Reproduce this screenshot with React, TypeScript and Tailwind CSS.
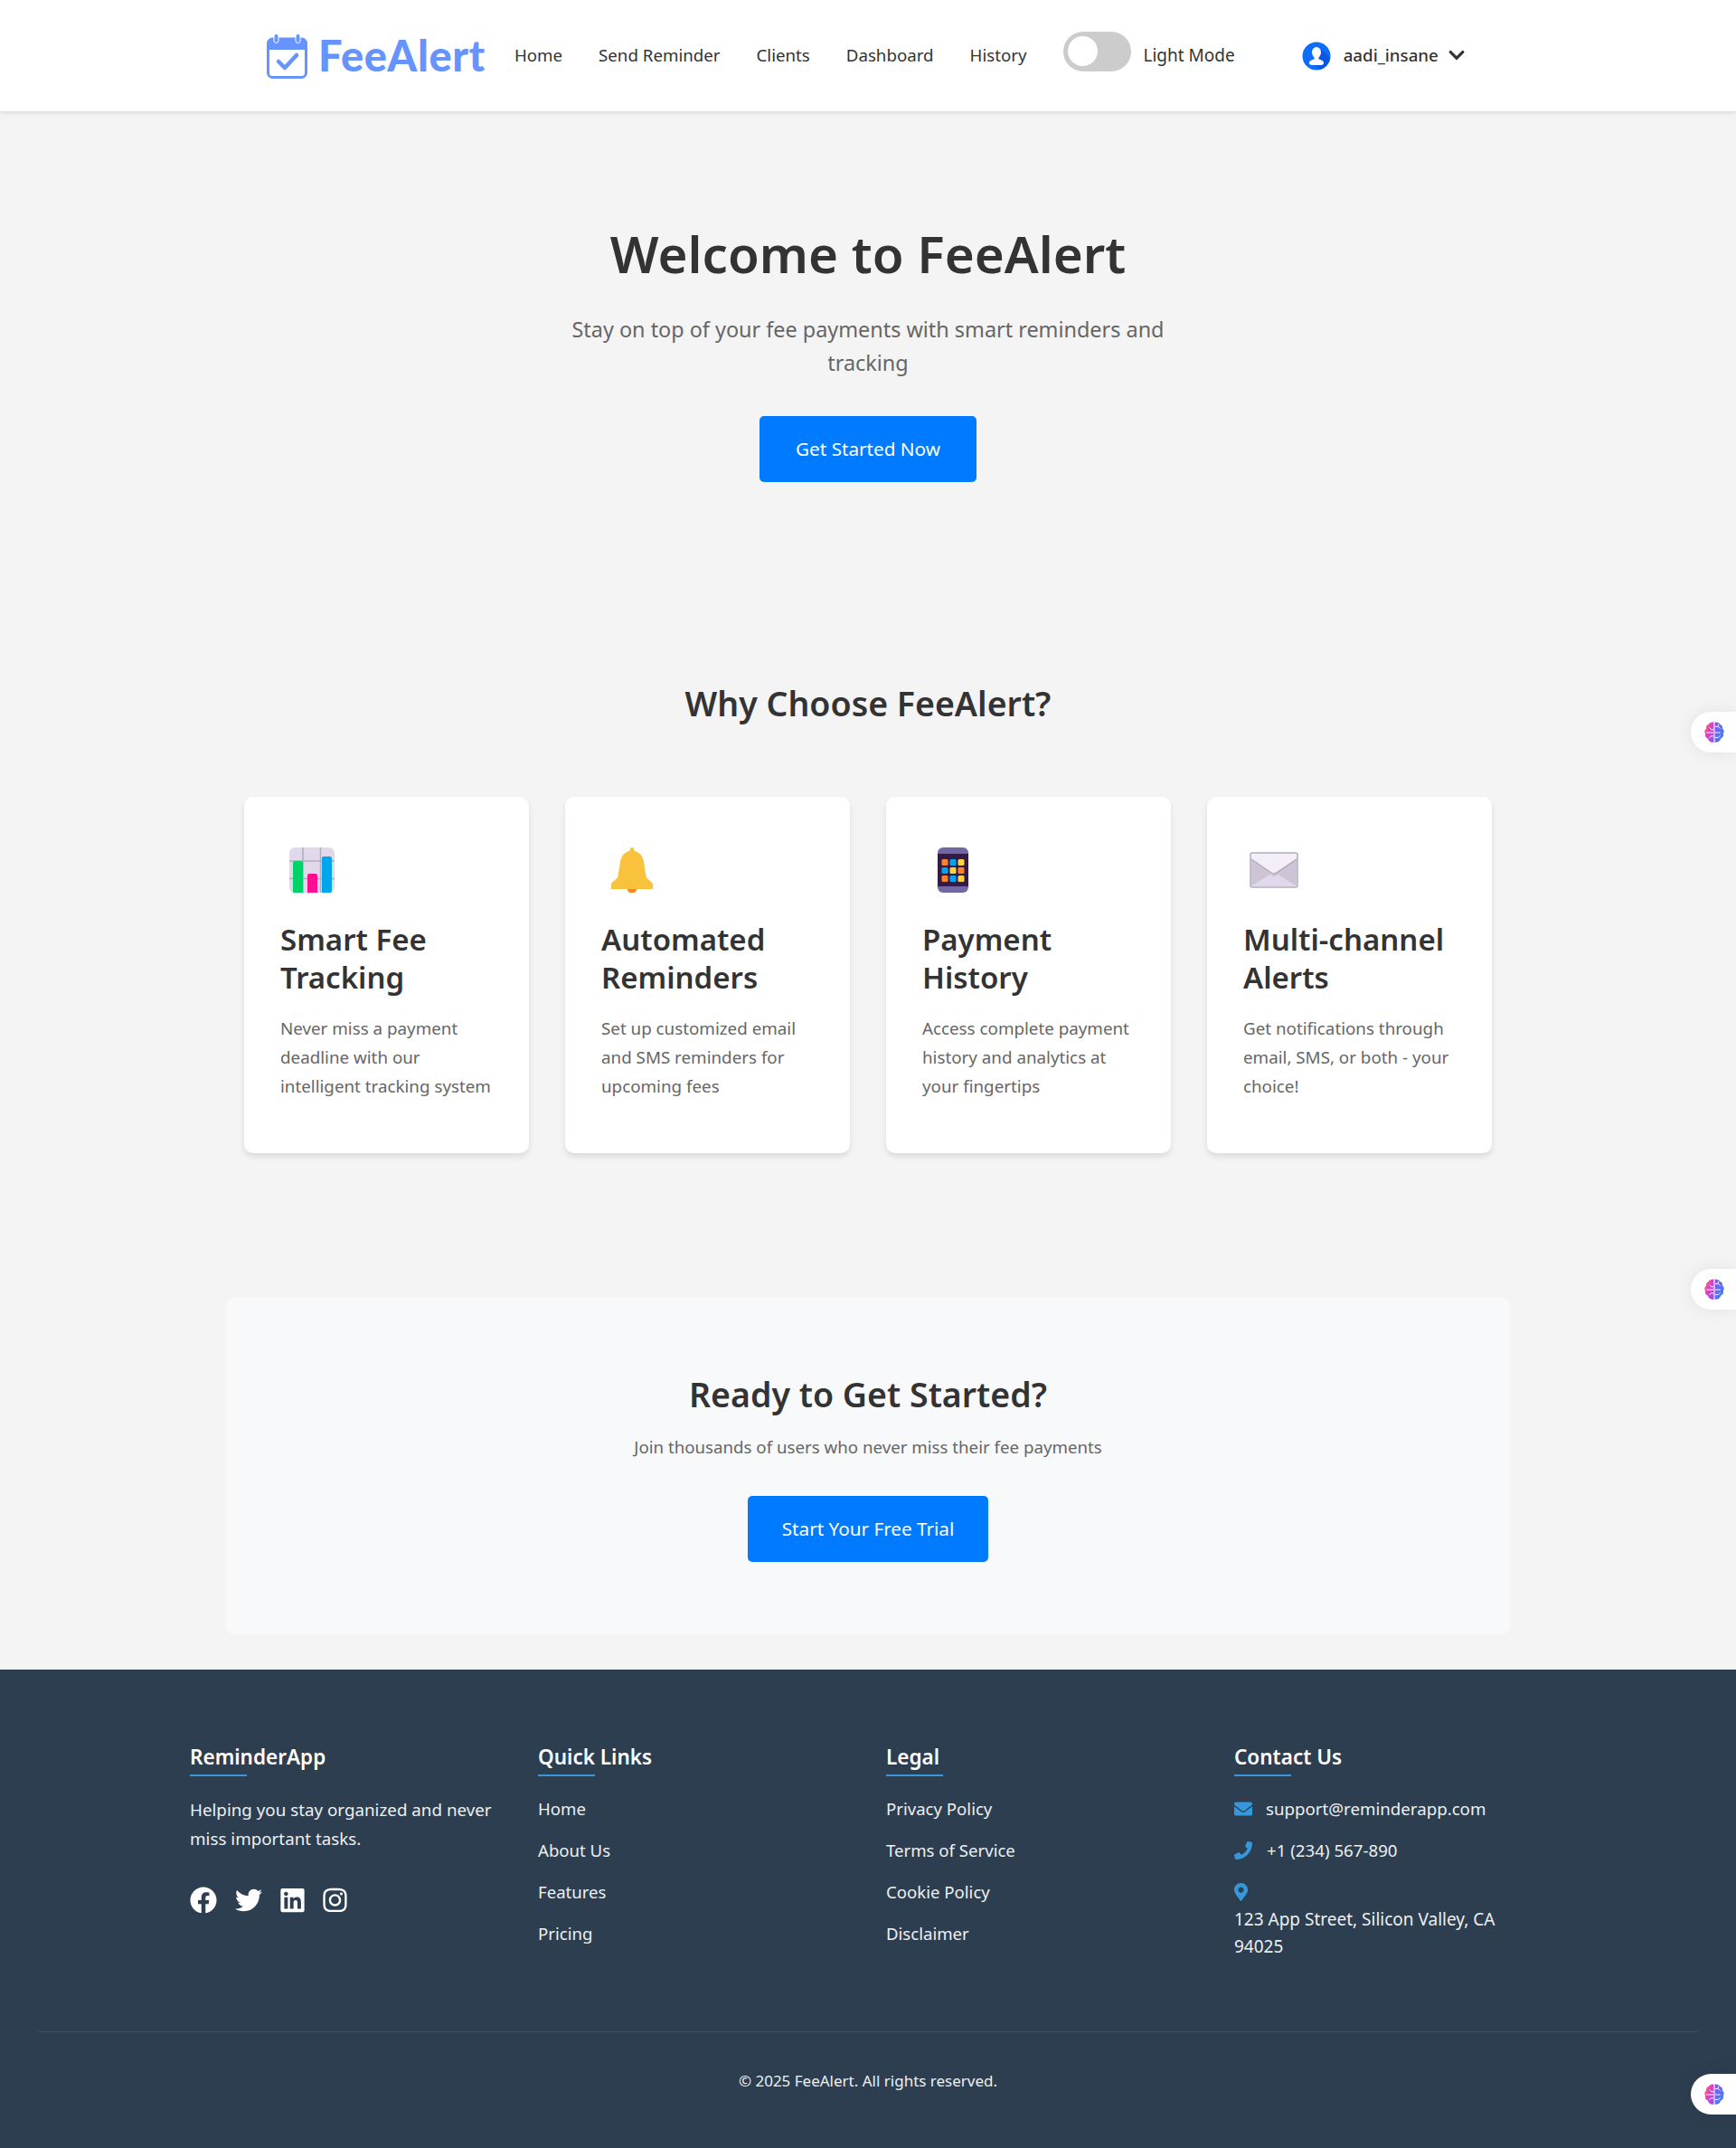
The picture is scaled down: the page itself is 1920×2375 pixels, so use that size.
import { FaChevronDown, FaEnvelope, FaFacebook, FaInstagram, FaLinkedin, FaMapMarkerAlt, FaPhoneAlt, FaTwitter } from "react-icons/fa";

const navLinks = ["Home", "Send Reminder", "Clients", "Dashboard", "History"];

function LogoIcon() {
  return (
    <svg width="46" height="51" viewBox="0 0 46 51" className="shrink-0">
      <rect x="1.500" y="7" width="42" height="42.500" rx="5" fill="none" stroke="#6694fc" strokeWidth="3" />
      <path d="M1.500 12a5 5 0 0 1 5-5h32a5 5 0 0 1 5 5v7H1.500z" fill="#6694fc" />
      <rect x="8" y="1.500" width="5" height="10" rx="2.500" fill="#6694fc" stroke="#fff" strokeWidth="1" />
      <rect x="32" y="1.500" width="5" height="10" rx="2.500" fill="#6694fc" stroke="#fff" strokeWidth="1" />
      <path d="M13 32l7 7 13-14" fill="none" stroke="#6694fc" strokeWidth="4.500" strokeLinecap="round" strokeLinejoin="round" />
    </svg>
  );
}

function UserIcon() {
  return (
    <svg width="32" height="32" viewBox="0 0 32 32" className="shrink-0">
      <circle cx="16" cy="16" r="15.5" fill="#0d6efd" />
      <path d="M22 9L31 18A15.5 15.5 0 0 1 20 31L12 23z" fill="#0b57e0" />
      <ellipse cx="16" cy="12" rx="5" ry="6" fill="#fff" />
      <path d="M13.5 17h5v2.5c3 1 5.500 1.500 5.500 4 0 1.500-1 2.500-3 2.500H11c-2 0-3-1-3-2.500 0-2.500 2.500-3 5.500-4z" fill="#fff" />
    </svg>
  );
}

function ChartIcon() {
  return (
    <svg width="50" height="50" viewBox="0 0 50 50">
      <rect width="50" height="50" rx="6" fill="#e1d8ec" />
      <path d="M15 0v50M34.500 0v50M0 15h50M0 34.500h50" stroke="#b4acbc" strokeWidth="1.500" />
      <path d="M4 50V17a2 2 0 0 1 2-2h7a2 2 0 0 1 2 2v33z" fill="#00d26a" />
      <path d="M20 50V31a2 2 0 0 1 2-2h7a2 2 0 0 1 2 2v19z" fill="#ff0e93" />
      <path d="M36 50V12a2 2 0 0 1 2-2h7a2 2 0 0 1 2 2v36a2 2 0 0 1-2 2z" fill="#00a6ed" />
    </svg>
  );
}

function BellIcon() {
  return (
    <svg width="50" height="50" viewBox="0 0 50 50">
      <circle cx="23" cy="45" r="5.500" fill="#ff8227" />
      <path d="M23 0c1.500 0 2.300 1 2.300 2.500v1.300C31 5 35 9.500 36 16l2.500 16c.5 3 6.500 5.500 7.500 8.500V46H0v-5.500C1 37.500 7 35 7.500 32L10 16C11 9.500 15 5 20.700 3.800V2.500C20.700 1 21.500 0 23 0z" fill="#f9c23c" />
    </svg>
  );
}

function PhoneIcon() {
  const grid = ["#ff822d", "#00a6ed", "#ffd33e", "#00a6ed", "#ffd33e", "#ff822d", "#ff822d", "#00a6ed", "#ffd33e"];
  return (
    <svg width="50" height="50" viewBox="0 0 50 50">
      <rect x="7" y="0" width="34" height="50" rx="6" fill="#7167a4" />
      <rect x="7" y="7" width="34" height="36" fill="#341a47" />
      {grid.map((c, i) => (
        <rect key={i} x={11.500 + (i % 3) * 9} y={13 + Math.floor(i / 3) * 9} width="7" height="7" rx="1.500" fill={c} />
      ))}
    </svg>
  );
}

function MailIcon() {
  return (
    <svg width="54" height="50" viewBox="0 0 54 50">
      <rect x="1" y="6" width="52" height="38" rx="2" fill="#f3eef8" stroke="#b4acbc" strokeWidth="1.500" />
      <path d="M2 13l22 15c2 1.300 4 1.300 6 0l22-15v29H2z" fill="#cdc4d6" />
      <path d="M2 43l20-13 5 2 5-2 20 13z" fill="#e1d8ec" />
      <path d="M2 13l22 15c2 1.300 4 1.300 6 0l22-15" fill="none" stroke="#b4acbc" strokeWidth="1.500" />
    </svg>
  );
}

function BrainIcon() {
  return (
    <svg width="24" height="24" viewBox="1.500 1 21 22">
      <defs>
        <linearGradient id="brainLeft" x1="0" y1="0" x2="1" y2="1">
          <stop offset="0" stopColor="#ff9a1f" />
          <stop offset="0.4" stopColor="#e83fc0" />
          <stop offset="1" stopColor="#8f52ee" />
        </linearGradient>
        <linearGradient id="brainRight" x1="0" y1="0" x2="1" y2="1">
          <stop offset="0" stopColor="#8f52ee" />
          <stop offset="1" stopColor="#2f8cf5" />
        </linearGradient>
      </defs>
      <path d="M11.500 1.500C8.800 1 7 2 6.300 3.800 4.300 4.200 3.300 6 3.800 7.800 2 9 1.500 11.500 3 13.200c-.8 2.300.5 4.300 2.500 4.800.5 2.500 2.500 4.300 6 3.800z" fill="url(#brainLeft)" />
      <path d="M12.500 1.500c2.700-.5 4.500.5 5.200 2.300 2 .4 3 2.200 2.500 4 1.800 1.200 2.300 3.700.8 5.400.8 2.300-.5 4.300-2.500 4.800-.5 2.500-2.500 4.300-6 3.800z" fill="url(#brainRight)" />
      <path d="M4 12h7M7 7l2 2h2M7 17l2-1.500h2M13 6h3l2 2M13 12h5M13 17h3l2-2M16 3.500V6" fill="none" stroke="#fff" strokeWidth="0.900" />
    </svg>
  );
}

function SideTab({ top }: { top: string }) {
  return (
    <div className={`absolute right-0 flex h-[45px] w-[50px] items-center rounded-l-[23px] bg-white pl-[14px] shadow-[0_0_20px_rgba(0,0,0,0.08)] ${top}`}>
      <BrainIcon />
    </div>
  );
}

const features = [
  { icon: <ChartIcon />, offset: "ml-[10px]", title: "Smart Fee Tracking", text: "Never miss a payment deadline with our intelligent tracking system" },
  { icon: <BellIcon />, offset: "ml-[11px]", title: "Automated Reminders", text: "Set up customized email and SMS reminders for upcoming fees" },
  { icon: <PhoneIcon />, offset: "ml-[10px]", title: "Payment History", text: "Access complete payment history and analytics at your fingertips" },
  { icon: <MailIcon />, offset: "ml-[7px]", title: "Multi-channel Alerts", text: "Get notifications through email, SMS, or both - your choice!" },
];

function FooterHeading({ children }: { children: string }) {
  return (
    <h3 className="relative mb-[21px] w-fit pb-[7px] text-[22.5px] leading-[29px] font-semibold text-white">
      {children}
      <span className="absolute bottom-0 left-0 h-[2px] w-[63px] bg-[#3498db]" />
    </h3>
  );
}

function FooterList({ items }: { items: string[] }) {
  return (
    <ul className="flex flex-col gap-[16px] text-[18.6px] leading-[30px] text-[#ecf0f1]">
      {items.map((item) => (
        <li key={item}>{item}</li>
      ))}
    </ul>
  );
}

export default function App() {
  return (
    <div className="relative min-h-[2375px] bg-[#f4f4f4] font-['Noto_Sans','Open_Sans',sans-serif] text-[#333]">
      <nav className="flex h-[123px] items-center bg-white pl-[295px] shadow-[0_2px_5px_rgba(0,0,0,0.1)]">
        <div className="flex items-center gap-[11px]">
          <LogoIcon />
          <span className="font-['Lato',sans-serif] text-[47px] leading-none font-black tracking-[0.6px] text-[#6694fc]">FeeAlert</span>
        </div>
        <div className="ml-[32px] flex items-center gap-[40px] text-[18.7px] text-[#333]">
          {navLinks.map((link) => (
            <a key={link}>{link}</a>
          ))}
        </div>
        <div className="mb-[10px] ml-[41px] flex h-[44px] w-[75px] items-center rounded-full bg-[#ccc] pl-[5px]">
          <span className="h-[33px] w-[33px] rounded-full bg-white" />
        </div>
        <span className="ml-[13px] text-[19px] text-[#333]">Light Mode</span>
        <div className="ml-[74px] flex items-center text-[18.7px] font-medium text-[#333]">
          <UserIcon />
          <span className="ml-[14px]">aadi_insane</span>
          <FaChevronDown className="mb-[2px] ml-[10px] h-[20px] w-[20px]" />
        </div>
      </nav>

      <section className="flex flex-col items-center pt-[118px]">
        <h1 className="text-[56.5px] leading-[80px] font-semibold text-[#333]">Welcome to FeeAlert</h1>
        <p className="mt-[25px] w-[700px] text-center text-[23.4px] leading-[37px] text-[#666]">
          Stay on top of your fee payments with smart reminders and tracking
        </p>
        <button className="mt-[40px] h-[73px] w-[240px] rounded-[5px] bg-[#007bff] text-[20.7px] text-white">Get Started Now</button>
      </section>

      <section className="mt-[218px] flex flex-col items-center">
        <h2 className="text-[37.5px] leading-[53px] font-semibold text-[#333]">Why Choose FeeAlert?</h2>
        <div className="mt-[77px] grid w-[1380px] grid-cols-4 gap-[40px]">
          {features.map((f) => (
            <div key={f.title} className="h-[394px] rounded-[10px] bg-white p-[40px] pt-[56px] shadow-[0_4px_6px_rgba(0,0,0,0.1)]">
              <div className={`flex h-[50px] items-center ${f.offset}`}>{f.icon}</div>
              <h3 className="mt-[31px] text-[33px] leading-[42px] font-semibold text-[#333]">{f.title}</h3>
              <p className="mt-[19px] text-[18.8px] leading-[32px] text-[#666]">{f.text}</p>
            </div>
          ))}
        </div>
      </section>

      <section className="mx-auto mt-[160px] flex h-[372px] w-[1420px] flex-col items-center rounded-[10px] bg-[#f8f9fa] pt-[80px]">
        <h2 className="text-[37.5px] leading-[53px] font-semibold text-[#333]">Ready to Get Started?</h2>
        <p className="mt-[16px] text-[18.7px] leading-[32px] text-[#666]">Join thousands of users who never miss their fee payments</p>
        <button className="mt-[38px] h-[73px] w-[266px] rounded-[5px] bg-[#007bff] text-[20.7px] text-white">Start Your Free Trial</button>
      </section>

      <footer className="mt-[39px] h-[529px] bg-[#2c3e50] px-[42px] pt-[82px]">
        <div className="mx-auto grid h-[318px] w-[1500px] grid-cols-4 gap-[40px]">
          <div>
            <FooterHeading>ReminderApp</FooterHeading>
            <p className="text-[18.8px] leading-[32px] text-[#ecf0f1]">Helping you stay organized and never miss important tasks.</p>
            <div className="mt-[37px] flex items-center gap-[20px] text-[30px] text-white">
              <FaFacebook />
              <FaTwitter className="h-[30px] w-[30px]" />
              <FaLinkedin className="h-[30px] w-[27px]" />
              <FaInstagram className="h-[30px] w-[27px]" />
            </div>
          </div>
          <div>
            <FooterHeading>Quick Links</FooterHeading>
            <FooterList items={["Home", "About Us", "Features", "Pricing"]} />
          </div>
          <div>
            <FooterHeading>Legal</FooterHeading>
            <FooterList items={["Privacy Policy", "Terms of Service", "Cookie Policy", "Disclaimer"]} />
          </div>
          <div>
            <FooterHeading>Contact Us</FooterHeading>
            <div className="flex flex-col gap-[16px] text-[18.7px] leading-[30px] text-[#ecf0f1]">
              <div className="flex items-center">
                <FaEnvelope className="h-[20px] w-[20px] text-[#3498db]" />
                <span className="ml-[15px]">support@reminderapp.com</span>
              </div>
              <div className="flex items-center">
                <FaPhoneAlt className="h-[20px] w-[20px] -scale-x-100 text-[#3498db]" />
                <span className="ml-[16px]">+1 (234) 567-890</span>
              </div>
              <div>
                <div className="flex h-[30px] items-center">
                  <FaMapMarkerAlt className="h-[20px] w-[15px] text-[#3498db]" />
                </div>
                <p className="max-w-[320px] text-[19px] leading-[30px]">123 App Street, Silicon Valley, CA 94025</p>
              </div>
            </div>
          </div>
        </div>
        <div className="border-t border-[#3d4f61] pt-[39px] text-center text-[17px] leading-[30px] text-[#ecf0f1]">
          © 2025 FeeAlert. All rights reserved.
        </div>
      </footer>

      <SideTab top="top-[787px]" />
      <SideTab top="top-[1403px]" />
      <SideTab top="top-[2293px]" />
    </div>
  );
}
